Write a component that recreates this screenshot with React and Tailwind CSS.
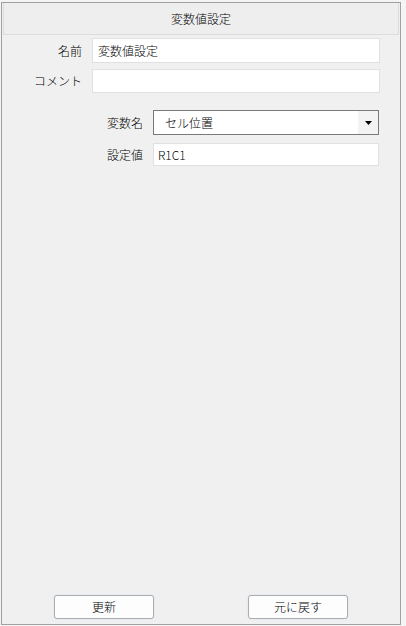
const font = { fontFamily: '"Noto Sans CJK JP", "Noto Sans", sans-serif' };

const Row = ({ label, labelWidth, children, className = "" }) => (
  <div className={`flex items-center ${className}`}>
    <div className={`${labelWidth} shrink-0 text-right pr-[10px] text-[12px]`}>{label}</div>
    {children}
  </div>
);

export default function App() {
  return (
    <div className="w-[406px] h-[626px] bg-[#f4f4f4] pt-[2px] pl-[1px] text-black font-light" style={font}>
      <div className="w-[400px] h-[623px] border border-[#a0a0a0] bg-[#f0f0f0] flex flex-col">
        {/* Title */}
        <div className="mx-[1px] h-[32px] border border-t-0 border-[#dcdcdc] bg-[#eeeeee] flex items-center justify-center text-[12px]">
          変数値設定
        </div>

        {/* Name / comment */}
        <div className="flex flex-col gap-[6px] mt-[3px]">
          <Row label="名前" labelWidth="w-[90px]">
            <div className="w-[288px] h-[25px] bg-white border border-[#e0e0e0] flex items-center px-[5px] text-[12px]">
              変数値設定
            </div>
          </Row>
          <Row label="コメント" labelWidth="w-[90px]">
            <div className="w-[288px] h-[24px] bg-white border border-[#e0e0e0]" />
          </Row>
        </div>

        {/* Variable */}
        <div className="flex flex-col gap-[8px] mt-[17px]">
          <Row label="変数名" labelWidth="w-[151px]">
            <div className="w-[226px] h-[25px] bg-white border border-[#7a7a7a] flex items-center">
              <span className="flex-1 pl-[11px] text-[12px]">セル位置</span>
              <div className="w-[20px] h-full bg-[#f3f3f3] flex items-center justify-center">
                <svg width="7" height="4" viewBox="0 0 7 4">
                  <path d="M0 0h7L3.5 4z" fill="#000" />
                </svg>
              </div>
            </div>
          </Row>
          <Row label="設定値" labelWidth="w-[151px]">
            <div className="w-[226px] h-[23px] bg-white border border-[#e0e0e0] flex items-center px-[4px] text-[12px]">
              R1C1
            </div>
          </Row>
        </div>

        <div className="flex-1" />

        {/* Buttons */}
        <div className="flex mb-[5px] pl-[52px] gap-[94px]">
          <button className="w-[100px] h-[24px] rounded-[3px] border border-[#adadad] bg-[#fdfdfd] shadow-[0_0_2px_#c7dcf0] text-[12px]">
            更新
          </button>
          <button className="w-[100px] h-[24px] rounded-[3px] border border-[#adadad] bg-[#fdfdfd] shadow-[0_0_2px_#c7dcf0] text-[12px]">
            元に戻す
          </button>
        </div>
      </div>
    </div>
  );
}
